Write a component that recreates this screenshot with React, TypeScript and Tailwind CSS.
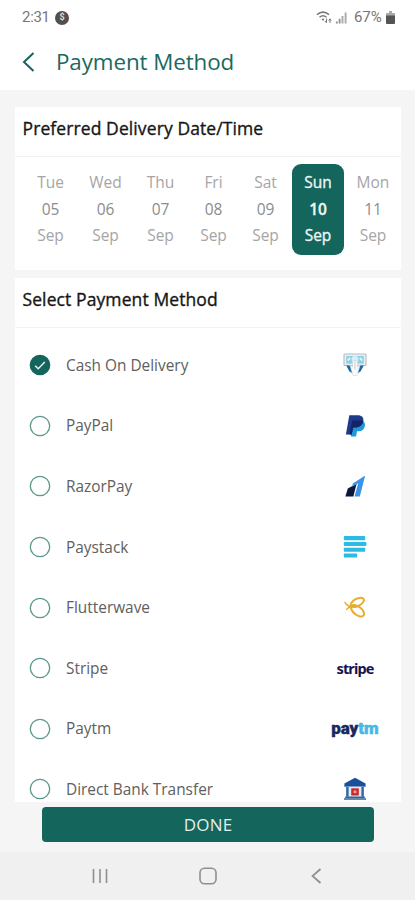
import { useState, type ReactNode } from 'react'
import clsx from 'clsx'

type DayOption = { day: string; date: string; month: string; width: string }

const days: DayOption[] = [
  { day: 'Tue', date: '05', month: 'Sep', width: 'w-[55px]' },
  { day: 'Wed', date: '06', month: 'Sep', width: 'w-[55px]' },
  { day: 'Thu', date: '07', month: 'Sep', width: 'w-[55px]' },
  { day: 'Fri', date: '08', month: 'Sep', width: 'w-[51px]' },
  { day: 'Sat', date: '09', month: 'Sep', width: 'w-[53px]' },
  { day: 'Sun', date: '10', month: 'Sep', width: 'w-[52px]' },
  { day: 'Mon', date: '11', month: 'Sep', width: 'w-[58px]' },
]

function CashIcon() {
  return (
    <svg width="24" height="24" viewBox="0 0 24 24">
      <rect x="1" y="1" width="22" height="11.5" rx="0.8" fill="#e9eff1" stroke="#b3bdc1" strokeWidth="1.1" />
      <rect x="3.2" y="3" width="17.6" height="7.6" fill="#8fd0e8" />
      <circle cx="12" cy="6.5" r="3.4" fill="#d8eef6" />
      <path d="M4.8 7.5l2.4-2.6M16.8 4.9l2.4 2.6" stroke="#eef8fb" strokeWidth="1.6" />
      <path d="M3.2 12.5h4l3.4 5-1.4 2.5-2.7-1.5z" fill="#1768a6" />
      <path d="M20.8 12.5h-4l-3.4 5 1.4 2.5 2.7-1.5z" fill="#1768a6" />
      <path
        d="M6.8 11.5l2.8 2.6V9q0-1.6 1.2-1.6T12 9q0-1.6 1.3-1.6T14.5 9v5.1l2.8-2.6-1.8 6.2-1.7 4.8h-3.6l-1.7-4.8z"
        fill="#fafafa"
        stroke="#c9d1d5"
        strokeWidth="0.6"
      />
      <path d="M12 9v7.5" stroke="#b9c3c8" strokeWidth="0.8" />
    </svg>
  )
}

function PaypalIcon() {
  return (
    <svg width="24" height="24" viewBox="0 0 24 24">
      <path d="M9.2 6.5h9.3c2.9.8 3.9 2.9 3.4 5.4-.8 3.8-3.3 5.3-6.5 5.3H14l-.9 5.2H7.8z" fill="#1f9ad8" />
      <path d="M6.3 1.2h8.3c4.4 0 6.4 2.3 5.7 6-.8 4-3.6 6.2-7.4 6.2h-2.8l-1.4 7.2H2.9z" fill="#1c3b8b" />
      <path d="M9.3 6.6h10.9c-.4 4.3-3.4 6.8-7.3 6.8h-2.8l-1.4 7.2H6.4z" fill="#152468" />
    </svg>
  )
}

function RazorpayIcon() {
  return (
    <svg width="24" height="24" viewBox="0 0 24 24">
      <path d="M2.4 22.6l2.4-8.2 8.8-4.6-3.2 12.8z" fill="#0b1738" />
      <path d="M9.8 9.4L22.2 1.4 16.8 22.6h-5.3l3.7-13.3-6 3.5z" fill="#3b94ea" />
    </svg>
  )
}

function PaystackIcon() {
  return (
    <svg width="24" height="24" viewBox="0 0 24 24" fill="#2bbbe4">
      <rect x="0.8" y="1.1" width="21.4" height="4.1" rx="0.9" />
      <rect x="0.8" y="6.9" width="22.6" height="4.1" rx="0.9" />
      <rect x="0.8" y="12.7" width="21.4" height="4.1" rx="0.9" />
      <rect x="0.8" y="18.5" width="13.4" height="4.1" rx="0.9" />
    </svg>
  )
}

function FlutterwaveIcon() {
  return (
    <svg width="24" height="24" viewBox="0 0 24 24" fill="none" stroke="#e9ac2b" strokeWidth="2" strokeLinecap="round">
      <ellipse cx="14.3" cy="6.4" rx="7.3" ry="3.6" transform="rotate(-28 14.3 6.4)" />
      <ellipse cx="14.6" cy="14.8" rx="7.6" ry="4.1" transform="rotate(38 14.6 14.8)" />
      <path d="M2 6.4c1.1 2.4 3.2 3.7 6.2 4.3M3.6 13.4c1.2-1.7 2.8-2.6 5-2.7" strokeWidth="1.4" />
    </svg>
  )
}

function BankIcon() {
  return (
    <svg width="24" height="24" viewBox="0 0 24 24">
      <path d="M12 .8l10.6 5.7v3.2H1.4V6.5z" fill="#1a4f9e" />
      <rect x="3" y="9.7" width="18" height="10" fill="#e3ebf1" />
      <path d="M4.4 9.7v10M19.6 9.7v10" stroke="#2c66a8" strokeWidth="2.4" />
      <rect x="8.2" y="11.3" width="7.6" height="7.2" fill="#cb2a2c" />
      <rect x="10.6" y="13.5" width="2.8" height="2.6" fill="#eea3a0" />
      <path d="M2.2 20.2h19.6M1 22h22" stroke="#336495" strokeWidth="1.4" />
    </svg>
  )
}

function StripeLogo() {
  return (
    <span className="font-['Noto_Sans','Open_Sans',sans-serif] text-[14.5px] leading-none font-bold tracking-[-0.9px] text-[#17134f]">
      stripe
    </span>
  )
}

function PaytmLogo() {
  return (
    <span className="flex font-['Roboto'] text-[17px] leading-none font-black tracking-[-0.1px] [-webkit-text-stroke:0.4px_currentColor]">
      <span className="text-[#17295f]">pay</span>
      <span className="text-[#45b8e8]">tm</span>
    </span>
  )
}

const methods: { name: string; icon: ReactNode }[] = [
  { name: 'Cash On Delivery', icon: <CashIcon /> },
  { name: 'PayPal', icon: <PaypalIcon /> },
  { name: 'RazorPay', icon: <RazorpayIcon /> },
  { name: 'Paystack', icon: <PaystackIcon /> },
  { name: 'Flutterwave', icon: <FlutterwaveIcon /> },
  { name: 'Stripe', icon: <StripeLogo /> },
  { name: 'Paytm', icon: <PaytmLogo /> },
  { name: 'Direct Bank Transfer', icon: <BankIcon /> },
]

function StatusBar() {
  return (
    <div className="flex h-[35px] items-center pr-[20px] pl-[22px] font-['Roboto'] text-[15px] text-[#777]">
      <span className="w-[33px] tracking-[-0.3px]">2:31</span>
      <span className="flex size-[14px] items-center justify-center rounded-full bg-[#505050] text-[9px] font-bold text-[#ddd]">
        $
      </span>
      <svg className="ml-auto" width="32" height="16" viewBox="0 0 32 16" fill="none">
        <path d="M1 4.6q6-5 12 0M3.5 7.3q3.5-3 7 0" stroke="#777" strokeWidth="1.5" />
        <path d="M5.5 9.1q1.5-1.2 3 0L7 11z" fill="#777" />
        <path d="M10.5 8.5v4M9 11l1.5 1.8M14 13V9M12.7 10.5L14 8.8l1.3 1.7" stroke="#777" strokeWidth="1" />
        <path d="M20.8 13.5v-2M23.6 13.5V8.8" stroke="#8d8d8d" strokeWidth="1.8" />
        <path d="M26.5 13.5V6M29.6 13.5V2.5" stroke="#aaa" strokeWidth="1.9" />
      </svg>
      <span className="ml-[6px] w-[31px] tracking-[-0.1px]">67%</span>
      <svg className="ml-[1px]" width="9" height="13" viewBox="0 0 9 13">
        <path d="M3 0h3v2h2q1 0 1 1v2H0V3q0-1 1-1h2z" fill="#aaa" />
        <path d="M0 4.5h9V12q0 1-1 1H1q-1 0-1-1z" fill="#555" />
      </svg>
    </div>
  )
}

function Radio({ checked }: { checked: boolean }) {
  return (
    <svg width="22" height="22" viewBox="0 0 22 22" fill="none" className="shrink-0">
      <circle cx="11" cy="11" r="9.7" fill={checked ? '#14655b' : 'none'} stroke={checked ? '#14655b' : '#5c978e'} strokeWidth="1.3" />
      {checked && <path d="M6.2 11.7l3 3 6.6-6.7" stroke="#e9f4f2" strokeWidth="1.5" />}
    </svg>
  )
}

function SectionTitle({ children }: { children: ReactNode }) {
  return (
    <h2 className="h-[49.5px] border-b border-[#f3f3f3] pl-[7.5px] text-[17.5px] leading-[42px] tracking-[0.1px] text-[#171717] [-webkit-text-stroke:0.35px_currentColor]">
      {children}
    </h2>
  )
}

export default function App() {
  const [day, setDay] = useState(5)
  const [method, setMethod] = useState(0)

  return (
    <div className="flex h-[900px] w-[415px] flex-col overflow-hidden bg-[#f5f5f5] font-['Open_Sans','Noto_Sans',sans-serif]">
      <header className="h-[90px] shrink-0 bg-white">
        <StatusBar />
        <div className="flex h-[54px] items-center pl-[22px]">
          <svg width="13" height="20" viewBox="0 0 13 20" fill="none">
            <path d="M11.5 1L2 10l9.5 9" stroke="#14655b" strokeWidth="2" />
          </svg>
          <h1 className="ml-[21px] text-[22.4px] tracking-[-0.1px] text-[#1b695f]">Payment Method</h1>
        </div>
      </header>

      <main className="flex h-[712px] shrink-0 flex-col gap-2 overflow-hidden pt-[17px] pr-[14px] pl-[15px]">
        <section className="h-[163px] shrink-0 bg-white">
          <SectionTitle>Preferred Delivery Date/Time</SectionTitle>
          <div className="flex pt-[7.5px] pl-[8px]">
            {days.map((d, i) => (
              <button
                key={d.date}
                type="button"
                onClick={() => setDay(i)}
                className={clsx(
                  'flex h-[91px] shrink-0 flex-col items-center rounded-[9px] pt-[5px] text-[15.5px] leading-[26.5px]',
                  d.width,
                  i === day
                    ? 'bg-[#14655b] text-[#edf5f4] [-webkit-text-stroke:0.35px_currentColor]'
                    : 'text-[#a5a5a5]',
                )}
              >
                <span>{d.day}</span>
                <span className={i === day ? 'font-semibold' : 'text-[#8c8c8c]'}>{d.date}</span>
                <span>{d.month}</span>
              </button>
            ))}
          </div>
        </section>

        <section className="shrink-0 bg-white">
          <SectionTitle>Select Payment Method</SectionTitle>
          <div className="flex flex-col pt-[7.5px]">
            {methods.map((m, i) => (
              <button
                key={m.name}
                type="button"
                onClick={() => setMethod(i)}
                className="flex h-[60.6px] items-center pl-[14px] text-left"
              >
                <Radio checked={i === method} />
                <span className="ml-[15px] flex-1 text-[15.4px] text-[#606060]">{m.name}</span>
                <span className="mr-[16px] flex w-[60px] items-center justify-center">{m.icon}</span>
              </button>
            ))}
          </div>
        </section>
      </main>

      <div className="h-[50px] shrink-0 pt-[5px] pr-[41px] pl-[42px]">
        <button type="button" className="h-[35px] w-full rounded-[4px] bg-[#14655b] text-[17px] tracking-[0.2px] text-[#e2efed]">
          DONE
        </button>
      </div>

      <nav className="flex h-[48px] shrink-0 items-center bg-[#f0f0f0] pl-[91px]">
        <svg width="18" height="18" viewBox="0 0 18 18" stroke="#8f8f8f" strokeWidth="1.6">
          <path d="M2.5 2v14M9 2v14M15.5 2v14" />
        </svg>
        <svg className="ml-[90px]" width="18" height="18" viewBox="0 0 18 18" fill="none" stroke="#8f8f8f" strokeWidth="1.6">
          <rect x="1" y="1.3" width="16" height="15.4" rx="4.5" />
        </svg>
        <svg className="ml-[93px]" width="12" height="18" viewBox="0 0 12 18" fill="none" stroke="#8f8f8f" strokeWidth="1.7">
          <path d="M10.5 2L2.5 9l8 7" />
        </svg>
      </nav>
    </div>
  )
}
